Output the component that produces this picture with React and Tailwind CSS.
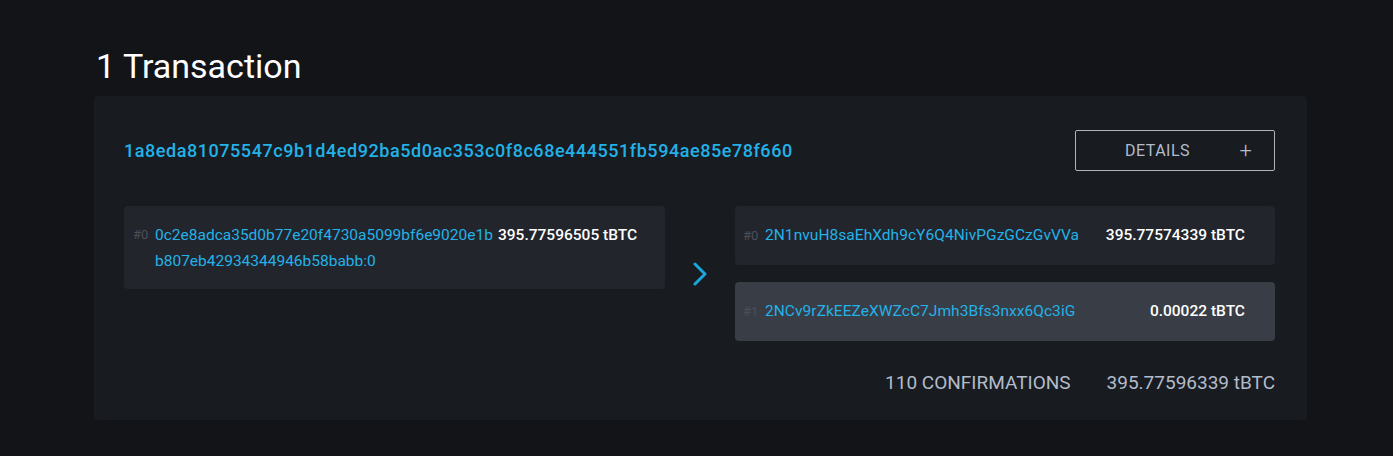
import React from "react";

const font = { fontFamily: "Roboto, 'Liberation Sans', sans-serif" };

function OutputRow({ idx, addr, amount, light }) {
  return (
    <div
      className={`flex items-center h-[59px] rounded-[4px] pl-[8px] pr-[30px] ${
        light ? "bg-[#393d45]" : "bg-[#22252c]"
      }`}
    >
      <span className="text-[13px] text-[#4b5058] w-[22px]">{idx}</span>
      <span className="text-[15.5px] text-[#22b2e8] tracking-[0.05px]">{addr}</span>
      <span className="ml-auto text-[15.5px] text-white font-medium">{amount}</span>
    </div>
  );
}

export default function App() {
  return (
    <div className="min-h-[456px] bg-[#121418] pt-[44px] pl-[94px] pr-[86px]" style={font}>
      <h1 className="text-[34px] leading-[44px] text-white pl-[2px] mb-[8px]">1 Transaction</h1>
      <div className="bg-[#181b20] rounded-[4px] pl-[30px] pr-[32px] pt-[34px] pb-[23px]">
        <div className="flex items-center justify-between">
          <span className="text-[18px] text-[#22b2e8] font-medium tracking-[0.55px]">
            1a8eda81075547c9b1d4ed92ba5d0ac353c0f8c68e444551fb594ae85e78f660
          </span>
          <button className="w-[200px] h-[41px] border border-[#aeb4be] rounded-[2px] flex items-center justify-between pl-[49px] pr-[22px] text-[#b2bccb]">
            <span className="text-[16px] tracking-[0.5px]">DETAILS</span>
            <span className="text-[22px] font-light leading-none">+</span>
          </button>
        </div>
        <div className="flex mt-[35px]">
          <div className="w-[541px]">
            <div className="bg-[#22252c] rounded-[4px] flex items-start pl-[9px] pt-[16px] pb-[15px]">
              <span className="text-[13px] text-[#4b5058] w-[22px] leading-[26px]">#0</span>
              <span className="w-[340px] break-all text-[15.5px] text-[#22b2e8] leading-[26px]">
                0c2e8adca35d0b77e20f4730a5099bf6e9020e1bb807eb42934344946b58babb:0
              </span>
              <span className="text-[15.5px] text-white font-medium leading-[26px] ml-[3px]">
                395.77596505 tBTC
              </span>
            </div>
          </div>
          <div className="w-[70px] flex items-center justify-center">
            <svg width="14" height="24" viewBox="0 0 14 24" fill="none">
              <path d="M2 2 L12 12 L2 22" stroke="#1aa7dc" strokeWidth="3" strokeLinecap="round" strokeLinejoin="round" />
            </svg>
          </div>
          <div className="flex-1 flex flex-col gap-[17px]">
            <OutputRow idx="#0" addr="2N1nvuH8saEhXdh9cY6Q4NivPGzGCzGvVVa" amount="395.77574339 tBTC" />
            <OutputRow idx="#1" addr="2NCv9rZkEEZeXWZcC7Jmh3Bfs3nxx6Qc3iG" amount="0.00022 tBTC" light />
          </div>
        </div>
        <div className="flex justify-end items-center gap-[36px] mt-[28px] text-[19px] leading-[28px] text-[#b2bccb]">
          <span>110 CONFIRMATIONS</span>
          <span>395.77596339 tBTC</span>
        </div>
      </div>
    </div>
  );
}
